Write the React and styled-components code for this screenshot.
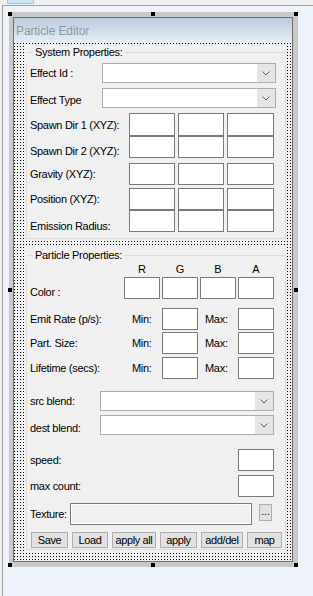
import React from "react";
import styled, { createGlobalStyle } from "styled-components";

const GlobalStyle = createGlobalStyle`
  body {
    margin: 0;
    background: #f0f0f0;
    font-family: "Liberation Sans", Arial, sans-serif;
  }
`;

const Page = styled.div`
  width: 313px;
  height: 596px;
  display: flex;
  flex-direction: column;
  background: #f0f0f0;
  overflow: hidden;
`;

const TopStrip = styled.div`
  height: 5px;
  padding-left: 7px;
  flex-shrink: 0;
`;

const Tab = styled.div`
  width: 25px;
  height: 3px;
  background: #cde6f7;
  border: 1px solid #9cc9ec;
  border-top: none;
`;

const Surface = styled.div`
  flex: 1;
  margin-left: 2px;
  border-top: 1px solid #a0a0a0;
  border-left: 1px solid #a0a0a0;
  background: #eef2fb;
  padding: 6px 0 0 6px;
`;

const Frame = styled.div`
  position: relative;
  box-sizing: border-box;
  width: 289px;
  height: 555px;
  padding: 5px 5px 5px 4px;
  background: #c9c9c9;
`;

const Handle = styled.div`
  position: absolute;
  width: 4px;
  height: 4px;
  background: #000;
  ${(p) => (p.$l !== undefined ? `left: ${p.$l}px;` : "")}
  ${(p) => (p.$r !== undefined ? `right: ${p.$r}px;` : "")}
  ${(p) => (p.$t !== undefined ? `top: ${p.$t}px;` : "")}
  ${(p) => (p.$b !== undefined ? `bottom: ${p.$b}px;` : "")}
`;

const Dialog = styled.div`
  height: 100%;
  box-sizing: border-box;
  border: 1px solid #707070;
  display: flex;
  flex-direction: column;
  background: #f0f0f0;
`;

const TitleBar = styled.div`
  height: 25px;
  flex-shrink: 0;
  display: flex;
  align-items: center;
  padding-left: 2px;
  background: linear-gradient(#bccadc, #e6eef7);
  color: #8e99a7;
  font-size: 12px;
  letter-spacing: -0.1px;
`;

const Client = styled.div`
  flex: 1;
  display: flex;
  flex-direction: column;
  padding: 3px 5px 0 11px;
  background-color: #f0f0f0;
  background-image: linear-gradient(to right, #f0f0f0 2px, transparent 2px),
    linear-gradient(to bottom, #f0f0f0 2px, #000 2px);
  background-size: 3px 3px;
  background-position: 1px -2px;
`;

const Group = styled.div`
  background: #f0f0f0;
  padding: 0 1px 1px 1px;
  margin-top: ${(p) => p.$mt || 0}px;
`;

const GroupHead = styled.div`
  height: ${(p) => p.$h}px;
  display: flex;
  align-items: center;
  gap: 2px;
  font-size: 11px;
  letter-spacing: -0.3px;
  color: #000;
`;

const HeadLine = styled.div`
  height: 1px;
  background: #dcdcdc;
  width: ${(p) => (p.$w ? `${p.$w}px` : "auto")};
  flex: ${(p) => (p.$w ? "none" : 1)};
  align-self: center;
`;

const GroupBody = styled.div`
  border: 1px solid #dcdcdc;
  border-top: none;
  padding: 0 3px ${(p) => p.$pb}px 3px;
`;

const Row = styled.div`
  display: flex;
  align-items: center;
  height: ${(p) => p.$h}px;
  margin-top: ${(p) => p.$mt || 0}px;
`;

const Label = styled.div`
  width: ${(p) => p.$w}px;
  flex-shrink: 0;
  margin-top: ${(p) => (p.$shift || 0) * 2}px;
  font-size: 11px;
  letter-spacing: -0.3px;
  color: #000;
  white-space: nowrap;
`;

const Combo = styled.div`
  width: 174px;
  height: 100%;
  box-sizing: border-box;
  border: 1px solid #acacac;
  background: #fff;
  display: flex;
  justify-content: flex-end;
`;

const DropButton = styled.div`
  width: 18px;
  background: #e5e5e5;
  display: flex;
  align-items: center;
  justify-content: center;
`;

const Edit = styled.div`
  width: ${(p) => p.$w}px;
  height: 100%;
  box-sizing: border-box;
  border: 1px solid #7a7a7a;
  background: #fff;
`;

const TextureEdit = styled(Edit)`
  background: #f0f0f0;
  box-shadow: inset 0 0 0 1px #fff;
`;

const SideEdit = styled(Edit)`
  margin-left: auto;
  margin-right: 8px;
`;

const Cells3 = styled.div`
  display: grid;
  grid-template-columns: 46px 46px 47px;
  column-gap: 3px;
  height: 100%;
`;

const Cells4 = styled.div`
  display: grid;
  grid-template-columns: repeat(4, 36px);
  column-gap: 2px;
  height: 100%;
  align-items: center;
`;

const ColHead = styled.div`
  text-align: center;
  font-size: 11px;
  color: #000;
`;

const Tag = styled.div`
  padding-left: ${(p) => p.$pl}px;
  font-size: 11px;
  letter-spacing: -0.3px;
  color: #000;
`;

const Browse = styled.div`
  width: 13px;
  height: 17px;
  box-sizing: border-box;
  margin-left: 7px;
  align-self: flex-start;
  margin-top: 1px;
  border: 1px solid #adadad;
  background: #e1e1e1;
  font-size: 10px;
  line-height: 13px;
  text-align: center;
  color: #000;
`;

const Buttons = styled.div`
  display: flex;
  gap: 4px;
  height: 16px;
  margin-top: 7px;
  margin-left: 1px;
`;

const Button = styled.button`
  width: ${(p) => p.$w}px;
  height: 16px;
  box-sizing: border-box;
  padding: 0;
  border: 1px solid #adadad;
  background: #e1e1e1;
  font-family: "Liberation Sans", Arial, sans-serif;
  font-size: 11px;
  letter-spacing: -0.4px;
  line-height: 14px;
  white-space: nowrap;
  color: #000;
`;

const Chevron = () => (
  <svg width="8" height="5" viewBox="0 0 8 5">
    <path d="M0.5 0.5 L4 4 L7.5 0.5" fill="none" stroke="#606060" strokeWidth="1" />
  </svg>
);

const ComboBox = () => (
  <Combo>
    <DropButton>
      <Chevron />
    </DropButton>
  </Combo>
);

const VecRow = ({ label, h = 22, mt = 0, shift = 0 }) => (
  <Row $h={h} $mt={mt}>
    <Label $w={99} $shift={shift}>{label}</Label>
    <Cells3>
      <Edit />
      <Edit />
      <Edit />
    </Cells3>
  </Row>
);

const RangeRow = ({ label, mt }) => (
  <Row $h={22} $mt={mt}>
    <Label $w={94}>{label}</Label>
    <Cells4>
      <Tag $pl={8}>Min:</Tag>
      <Edit $w={36} />
      <Tag $pl={5}>Max:</Tag>
      <Edit $w={36} />
    </Cells4>
  </Row>
);

const App = () => {
  return (
    <Page>
      <GlobalStyle />
      <TopStrip>
        <Tab />
      </TopStrip>
      <Surface>
        <Frame>
          <Dialog>
            <TitleBar>Particle Editor</TitleBar>
            <Client>
              <Group>
                <GroupHead $h={12}>
                  <HeadLine $w={7} />
                  <span>System Properties:</span>
                  <HeadLine />
                </GroupHead>
                <GroupBody $pb={6}>
                  <Row $h={20} $mt={5}>
                    <Label $w={72}>Effect Id :</Label>
                    <ComboBox />
                  </Row>
                  <Row $h={20} $mt={5}>
                    <Label $w={72} $shift={2}>Effect Type</Label>
                    <ComboBox />
                  </Row>
                  <VecRow label="Spawn Dir 1 (XYZ):" h={23} mt={5} />
                  <VecRow label="Spawn Dir 2 (XYZ):" shift={4} />
                  <VecRow label="Gravity (XYZ):" mt={5} />
                  <VecRow label="Position (XYZ):" mt={3} />
                  <VecRow label="Emission Radius:" shift={5} />
                </GroupBody>
              </Group>

              <Group $mt={7}>
                <GroupHead $h={16}>
                  <HeadLine $w={7} />
                  <span>Particle Properties:</span>
                  <HeadLine />
                </GroupHead>
                <GroupBody $pb={1}>
                  <Row $h={12}>
                    <Label $w={94} />
                    <Cells4>
                      <ColHead>R</ColHead>
                      <ColHead>G</ColHead>
                      <ColHead>B</ColHead>
                      <ColHead>A</ColHead>
                    </Cells4>
                  </Row>
                  <Row $h={22} $mt={2}>
                    <Label $w={94} $shift={4}>Color :</Label>
                    <Cells4>
                      <Edit $w={36} />
                      <Edit $w={36} />
                      <Edit $w={36} />
                      <Edit $w={36} />
                    </Cells4>
                  </Row>
                  <RangeRow label="Emit Rate (p/s):" mt={9} />
                  <RangeRow label="Part. Size:" mt={2} />
                  <RangeRow label="Lifetime (secs):" mt={3} />
                  <Row $h={20} $mt={12}>
                    <Label $w={70}>src blend:</Label>
                    <ComboBox />
                  </Row>
                  <Row $h={20} $mt={4}>
                    <Label $w={70} $shift={3}>dest blend:</Label>
                    <ComboBox />
                  </Row>
                  <Row $h={22} $mt={14}>
                    <Label $w={70}>speed:</Label>
                    <SideEdit $w={36} />
                  </Row>
                  <Row $h={22} $mt={4}>
                    <Label $w={70}>max count:</Label>
                    <SideEdit $w={36} />
                  </Row>
                  <Row $h={22} $mt={6}>
                    <Label $w={40}>Texture:</Label>
                    <TextureEdit $w={182} />
                    <Browse>...</Browse>
                  </Row>
                  <Buttons>
                    <Button $w={37}>Save</Button>
                    <Button $w={36}>Load</Button>
                    <Button $w={44}>apply all</Button>
                    <Button $w={37}>apply</Button>
                    <Button $w={42}>add/del</Button>
                    <Button $w={35}>map</Button>
                  </Buttons>
                </GroupBody>
              </Group>
            </Client>
          </Dialog>
          <Handle $l={-1} $t={0} />
          <Handle $l={142} $t={0} />
          <Handle $r={0} $t={0} />
          <Handle $l={-1} $t={276} />
          <Handle $r={0} $t={276} />
          <Handle $l={-1} $b={0} />
          <Handle $l={142} $b={0} />
          <Handle $r={0} $b={0} />
        </Frame>
      </Surface>
    </Page>
  );
};

export default App;
